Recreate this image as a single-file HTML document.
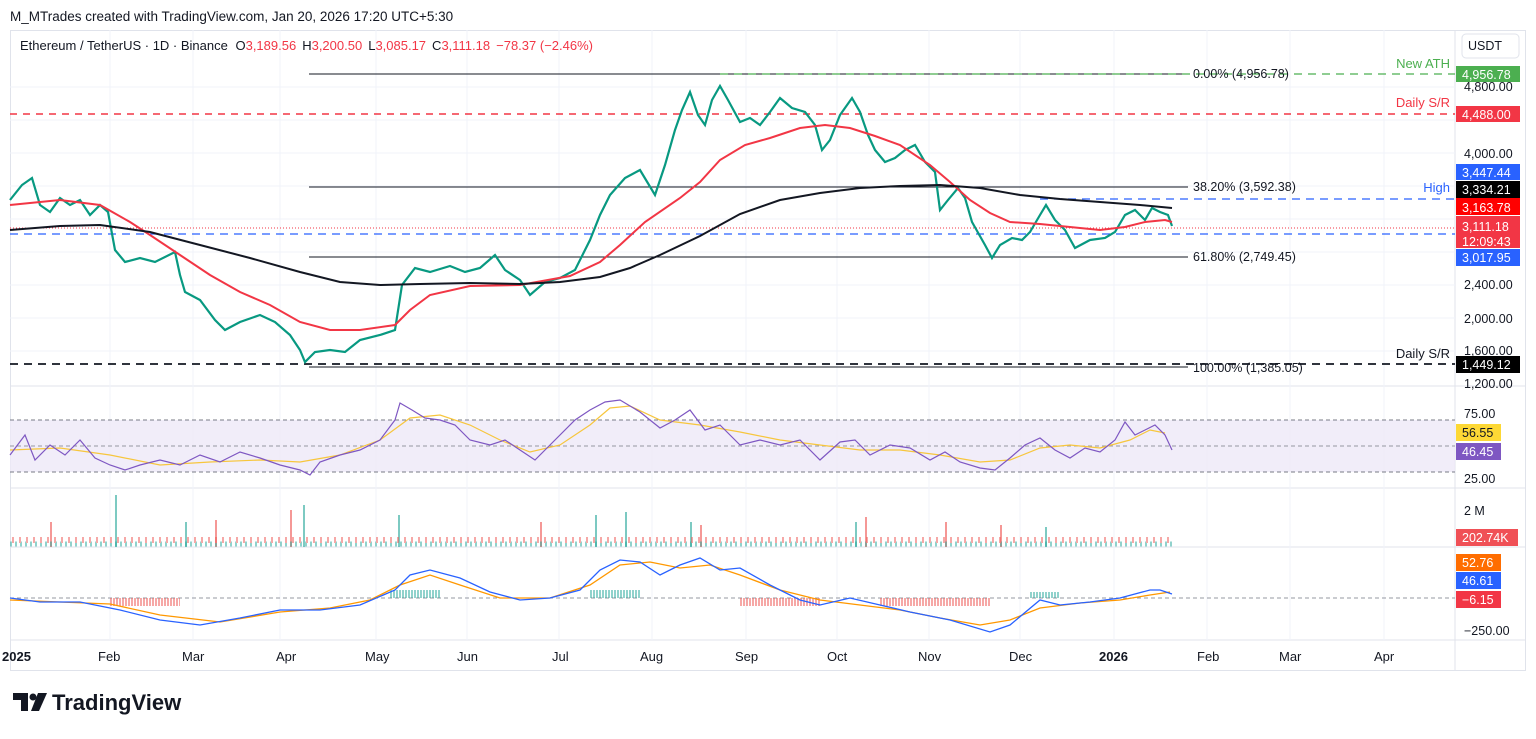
<!DOCTYPE html>
<html><head><meta charset="utf-8">
<style>
body{margin:0;background:#fff;width:1536px;height:734px;overflow:hidden;font-family:"Liberation Sans",sans-serif;}
svg text{font-family:"Liberation Sans",sans-serif;}
</style></head><body>
<svg width="1536" height="734" xmlns="http://www.w3.org/2000/svg">
<text x="10" y="21" font-size="13.5" fill="#131722">M_MTrades created with TradingView.com, Jan 20, 2026 17:20 UTC+5:30</text>
<rect x="10.5" y="30.5" width="1515" height="640" fill="none" stroke="#e0e3eb"/>
<line x1="1455" y1="30" x2="1455" y2="670" stroke="#e0e3eb"/>
<line x1="10" y1="386" x2="1525" y2="386" stroke="#e0e3eb"/>
<line x1="10" y1="488" x2="1525" y2="488" stroke="#e0e3eb"/>
<line x1="10" y1="547" x2="1525" y2="547" stroke="#e0e3eb"/>
<line x1="10" y1="640" x2="1525" y2="640" stroke="#e0e3eb"/>
<g stroke="#f0f3fa">
<line x1="110" y1="30" x2="110" y2="640"/><line x1="193" y1="30" x2="193" y2="640"/><line x1="280" y1="30" x2="280" y2="640"/><line x1="376" y1="30" x2="376" y2="640"/><line x1="467" y1="30" x2="467" y2="640"/><line x1="559" y1="30" x2="559" y2="640"/><line x1="652" y1="30" x2="652" y2="640"/><line x1="746" y1="30" x2="746" y2="640"/><line x1="837" y1="30" x2="837" y2="640"/><line x1="929" y1="30" x2="929" y2="640"/><line x1="1020" y1="30" x2="1020" y2="640"/><line x1="1114" y1="30" x2="1114" y2="640"/><line x1="1207" y1="30" x2="1207" y2="640"/><line x1="1290" y1="30" x2="1290" y2="640"/><line x1="1384" y1="30" x2="1384" y2="640"/>
<line x1="10" y1="87" x2="1455" y2="87"/><line x1="10" y1="120" x2="1455" y2="120"/><line x1="10" y1="153" x2="1455" y2="153"/><line x1="10" y1="186" x2="1455" y2="186"/><line x1="10" y1="219" x2="1455" y2="219"/><line x1="10" y1="252" x2="1455" y2="252"/><line x1="10" y1="285" x2="1455" y2="285"/><line x1="10" y1="318" x2="1455" y2="318"/><line x1="10" y1="351" x2="1455" y2="351"/>
</g>
<text x="20" y="50" font-size="13" fill="#131722">Ethereum / TetherUS · 1D · Binance <tspan dx="4">O</tspan><tspan fill="#f23645">3,189.56</tspan><tspan dx="6">H</tspan><tspan fill="#f23645">3,200.50</tspan><tspan dx="6">L</tspan><tspan fill="#f23645">3,085.17</tspan><tspan dx="6">C</tspan><tspan fill="#f23645">3,111.18</tspan><tspan dx="6" fill="#f23645">−78.37 (−2.46%)</tspan></text>
<!-- fib lines -->
<line x1="309" y1="74" x2="1188" y2="74" stroke="#131722"/>
<line x1="720" y1="74" x2="1455" y2="74" stroke="#4caf50" stroke-dasharray="8,6" stroke-width="1.3"/>
<text x="1193" y="78" font-size="12.5" fill="#131722">0.00% (4,956.78)</text>
<line x1="10" y1="114" x2="1455" y2="114" stroke="#f23645" stroke-dasharray="7,6" stroke-width="1.5"/>
<line x1="309" y1="187" x2="1188" y2="187" stroke="#131722"/>
<text x="1193" y="191" font-size="12.5" fill="#131722">38.20% (3,592.38)</text>
<line x1="1040" y1="199" x2="1455" y2="199" stroke="#2962ff" stroke-dasharray="8,6" stroke-width="1.3"/>
<line x1="10" y1="228" x2="1455" y2="228" stroke="#f23645" stroke-dasharray="1,2" stroke-width="1"/>
<line x1="10" y1="234" x2="1455" y2="234" stroke="#2962ff" stroke-dasharray="8,6" stroke-width="1.3"/>
<line x1="309" y1="257" x2="1188" y2="257" stroke="#131722"/>
<text x="1193" y="261" font-size="12.5" fill="#131722">61.80% (2,749.45)</text>
<line x1="10" y1="364" x2="1455" y2="364" stroke="#131722" stroke-dasharray="8,6" stroke-width="1.8"/>
<line x1="309" y1="367" x2="1188" y2="367" stroke="#131722"/>
<text x="1193" y="372" font-size="12.5" fill="#131722">100.00% (1,385.05)</text>
<text x="1450" y="68" font-size="13" fill="#4caf50" text-anchor="end">New ATH</text>
<text x="1450" y="107" font-size="13" fill="#f23645" text-anchor="end">Daily S/R</text>
<text x="1450" y="192" font-size="13" fill="#2962ff" text-anchor="end">High</text>
<text x="1450" y="358" font-size="13" fill="#131722" text-anchor="end">Daily S/R</text>
<!-- price -->
<polyline fill="none" stroke="#089981" stroke-width="2.2" points="10,200 22,185 32,178 40,205 50,212 60,198 70,205 80,200 90,215 100,205 108,212 115,250 125,262 140,258 155,262 175,252 180,275 185,292 200,300 215,320 225,330 240,322 260,315 275,322 290,335 300,350 305,362 315,352 330,350 345,352 360,340 380,335 395,330 402,285 415,268 430,272 450,266 465,272 480,268 495,255 505,270 520,280 530,295 545,282 560,278 575,270 590,240 600,215 610,195 625,178 640,170 655,195 665,165 675,130 682,110 690,92 698,115 705,125 712,100 720,86 728,100 740,122 750,118 760,125 770,112 780,98 792,108 805,112 815,125 822,150 830,140 840,115 852,98 860,112 868,135 875,150 885,162 895,158 905,150 915,145 925,162 935,172 940,210 948,200 958,188 965,198 972,222 985,245 992,258 1000,245 1012,238 1022,240 1030,232 1040,215 1046,205 1055,220 1065,230 1075,248 1090,240 1105,238 1115,232 1125,215 1135,210 1145,220 1152,208 1160,212 1168,215 1172,226"/>
<polyline fill="none" stroke="#f23645" stroke-width="2" points="10,205 60,200 100,205 130,222 150,235 180,255 210,275 240,292 270,305 300,322 330,330 360,330 395,325 410,310 430,295 470,286 520,285 570,276 600,262 620,245 645,222 680,198 700,182 720,160 745,145 770,138 800,128 825,125 850,128 875,136 900,145 930,165 950,182 970,200 990,213 1010,222 1040,224 1060,226 1080,228 1100,230 1125,227 1145,222 1165,220 1172,222"/>
<polyline fill="none" stroke="#131722" stroke-width="2" points="10,230 60,226 100,225 150,232 200,245 250,258 300,272 340,282 380,285 420,284 470,283 520,284 560,282 600,277 630,268 660,255 700,236 740,214 780,200 820,193 860,188 900,186 940,185 980,188 1020,195 1060,199 1100,202 1140,205 1172,208"/>
<!-- RSI -->
<rect x="10" y="420" width="1445" height="52" fill="#ede9f7" opacity="0.8"/>
<line x1="10" y1="420" x2="1455" y2="420" stroke="#787b86" stroke-dasharray="4,3"/>
<line x1="10" y1="446" x2="1455" y2="446" stroke="#9598a1" stroke-dasharray="4,3"/>
<line x1="10" y1="472" x2="1455" y2="472" stroke="#787b86" stroke-dasharray="4,3"/>
<polyline fill="none" stroke="#f7c63d" stroke-width="1.2" points="10,450 60,448 110,455 160,465 210,462 260,460 300,462 340,455 380,440 410,418 440,415 470,425 500,440 530,452 560,445 590,425 610,408 630,406 660,420 700,425 740,432 780,440 820,445 860,450 900,450 940,455 980,462 1010,460 1040,448 1070,445 1100,448 1130,440 1150,430 1165,433"/>
<polyline fill="none" stroke="#7e57c2" stroke-width="1.2" points="10,455 25,435 35,460 50,445 65,455 80,440 95,458 110,465 125,470 140,465 160,460 180,465 200,455 220,462 240,452 260,458 280,465 300,470 310,475 320,462 340,455 360,450 380,440 395,420 400,403 412,410 425,418 440,420 455,425 470,440 490,445 505,440 520,450 535,460 555,440 575,420 590,410 605,402 620,400 640,412 660,428 675,420 690,410 705,430 720,425 740,445 760,440 780,445 800,440 820,460 840,442 855,440 870,455 890,445 910,448 930,460 945,452 960,462 980,468 995,470 1010,458 1025,445 1040,438 1055,450 1070,458 1085,448 1100,452 1115,440 1125,422 1135,435 1145,430 1155,425 1165,435 1172,450"/>
<!-- volume -->
<g fill="#26a69a" opacity="0.6">
<rect x="115" y="495" width="2" height="52"/><rect x="185" y="522" width="2" height="25"/><rect x="303" y="505" width="2" height="42"/><rect x="398" y="515" width="2" height="32"/><rect x="595" y="515" width="2" height="32"/><rect x="625" y="512" width="2" height="35"/><rect x="690" y="522" width="2" height="25"/><rect x="855" y="522" width="2" height="25"/><rect x="1045" y="527" width="2" height="20"/>
</g>
<g fill="#ef5350" opacity="0.6">
<rect x="50" y="522" width="2" height="25"/><rect x="215" y="520" width="2" height="27"/><rect x="290" y="510" width="2" height="37"/><rect x="540" y="522" width="2" height="25"/><rect x="700" y="525" width="2" height="22"/><rect x="865" y="517" width="2" height="30"/><rect x="945" y="522" width="2" height="25"/><rect x="1000" y="525" width="2" height="22"/>
</g>
<g stroke-width="2" stroke-dasharray="2,3" opacity="0.5">
<line x1="10" y1="544" x2="1172" y2="544" stroke="#26a69a" stroke-width="5"/>
<line x1="12" y1="540" x2="1172" y2="540" stroke="#ef5350" stroke-width="6" stroke-dasharray="2,5"/>
</g>
<!-- MACD -->
<line x1="10" y1="598" x2="1455" y2="598" stroke="#9598a1" stroke-dasharray="4,3"/>
<g stroke-dasharray="2,1" stroke-width="5" opacity="0.5">
<line x1="390" y1="594" x2="440" y2="594" stroke="#26a69a" stroke-width="8"/>
<line x1="590" y1="594" x2="640" y2="594" stroke="#26a69a" stroke-width="8"/>
<line x1="110" y1="602" x2="180" y2="602" stroke="#ef5350" stroke-width="8"/>
<line x1="740" y1="602" x2="820" y2="602" stroke="#ef5350" stroke-width="8"/>
<line x1="880" y1="602" x2="990" y2="602" stroke="#ef5350" stroke-width="8"/>
<line x1="1030" y1="595" x2="1060" y2="595" stroke="#26a69a" stroke-width="6"/>
</g>
<polyline fill="none" stroke="#ff9800" stroke-width="1.3" points="10,600 60,602 110,604 160,615 220,622 280,612 330,608 370,600 400,585 430,575 460,585 500,598 550,598 590,585 620,565 650,562 680,568 710,565 740,575 780,590 820,600 860,605 900,610 940,618 980,625 1010,620 1040,608 1080,603 1120,600 1150,595 1170,592"/>
<polyline fill="none" stroke="#2962ff" stroke-width="1.3" points="10,598 40,602 80,602 120,610 160,620 200,625 240,618 280,610 320,610 360,605 395,590 410,575 430,570 460,578 490,592 520,600 550,598 580,590 600,570 620,560 640,562 660,575 680,565 700,558 720,570 740,568 770,585 800,600 820,605 850,598 880,605 910,612 950,620 990,632 1010,625 1040,600 1060,605 1090,602 1120,598 1150,590 1160,590 1172,594"/>
<!-- axis labels -->
<rect x="1462" y="34" width="57" height="24" rx="4" fill="#fff" stroke="#e0e3eb"/>
<text x="1468" y="50" font-size="12.5" fill="#131722">USDT</text>
<g font-size="12.5" fill="#131722">
<text x="1464" y="91">4,800.00</text><text x="1464" y="158">4,000.00</text><text x="1464" y="289">2,400.00</text><text x="1464" y="323">2,000.00</text><text x="1464" y="355">1,600.00</text><text x="1464" y="388">1,200.00</text>
<text x="1464" y="418">75.00</text><text x="1464" y="483">25.00</text><text x="1464" y="515">2 M</text><text x="1464" y="635">−250.00</text>
</g>
<g font-size="12.5" fill="#fff">
<rect x="1456" y="66" width="64" height="16" fill="#4caf50"/><text x="1462" y="79">4,956.78</text>
<rect x="1456" y="106" width="64" height="16" fill="#f23645"/><text x="1462" y="119">4,488.00</text>
<rect x="1456" y="164" width="64" height="16" fill="#2962ff"/><text x="1462" y="177">3,447.44</text>
<rect x="1456" y="181" width="64" height="17" fill="#000"/><text x="1462" y="194">3,334.21</text>
<rect x="1456" y="198" width="64" height="17" fill="#ff0000"/><text x="1462" y="212">3,163.78</text>
<rect x="1456" y="216" width="64" height="32" fill="#f23645"/><text x="1462" y="231">3,111.18</text><text x="1462" y="246">12:09:43</text>
<rect x="1456" y="249" width="64" height="17" fill="#2962ff"/><text x="1462" y="262">3,017.95</text>
<rect x="1456" y="356" width="64" height="17" fill="#000"/><text x="1462" y="369">1,449.12</text>
<rect x="1456" y="424" width="45" height="17" fill="#fdd835"/><text x="1462" y="437" fill="#131722">56.55</text>
<rect x="1456" y="443" width="45" height="17" fill="#7e57c2"/><text x="1462" y="456">46.45</text>
<rect x="1456" y="529" width="62" height="17" fill="#f05056"/><text x="1462" y="542">202.74K</text>
<rect x="1456" y="554" width="45" height="17" fill="#ff6d00"/><text x="1462" y="567">52.76</text>
<rect x="1456" y="572" width="45" height="17" fill="#2962ff"/><text x="1462" y="585">46.61</text>
<rect x="1456" y="591" width="45" height="17" fill="#f23645"/><text x="1462" y="604">−6.15</text>
</g>
<g font-size="13" fill="#131722">
<text x="2" y="661" font-weight="bold">2025</text><text x="98" y="661">Feb</text><text x="182" y="661">Mar</text><text x="276" y="661">Apr</text><text x="365" y="661">May</text><text x="457" y="661">Jun</text><text x="552" y="661">Jul</text><text x="640" y="661">Aug</text><text x="735" y="661">Sep</text><text x="827" y="661">Oct</text><text x="918" y="661">Nov</text><text x="1009" y="661">Dec</text><text x="1099" y="661" font-weight="bold">2026</text><text x="1197" y="661">Feb</text><text x="1279" y="661">Mar</text><text x="1374" y="661">Apr</text>
</g>
<!-- logo -->
<path d="M13,693 h15 v18 h-7 v-11 h-8 z" fill="#131722"/>
<circle cx="33" cy="697" r="3.5" fill="#131722"/>
<path d="M38,693 h9 l-8,18 h-8 z" fill="#131722"/>
<text x="52" y="710" font-size="22" font-weight="bold" fill="#131722">TradingView</text>
</svg>
</body></html>
